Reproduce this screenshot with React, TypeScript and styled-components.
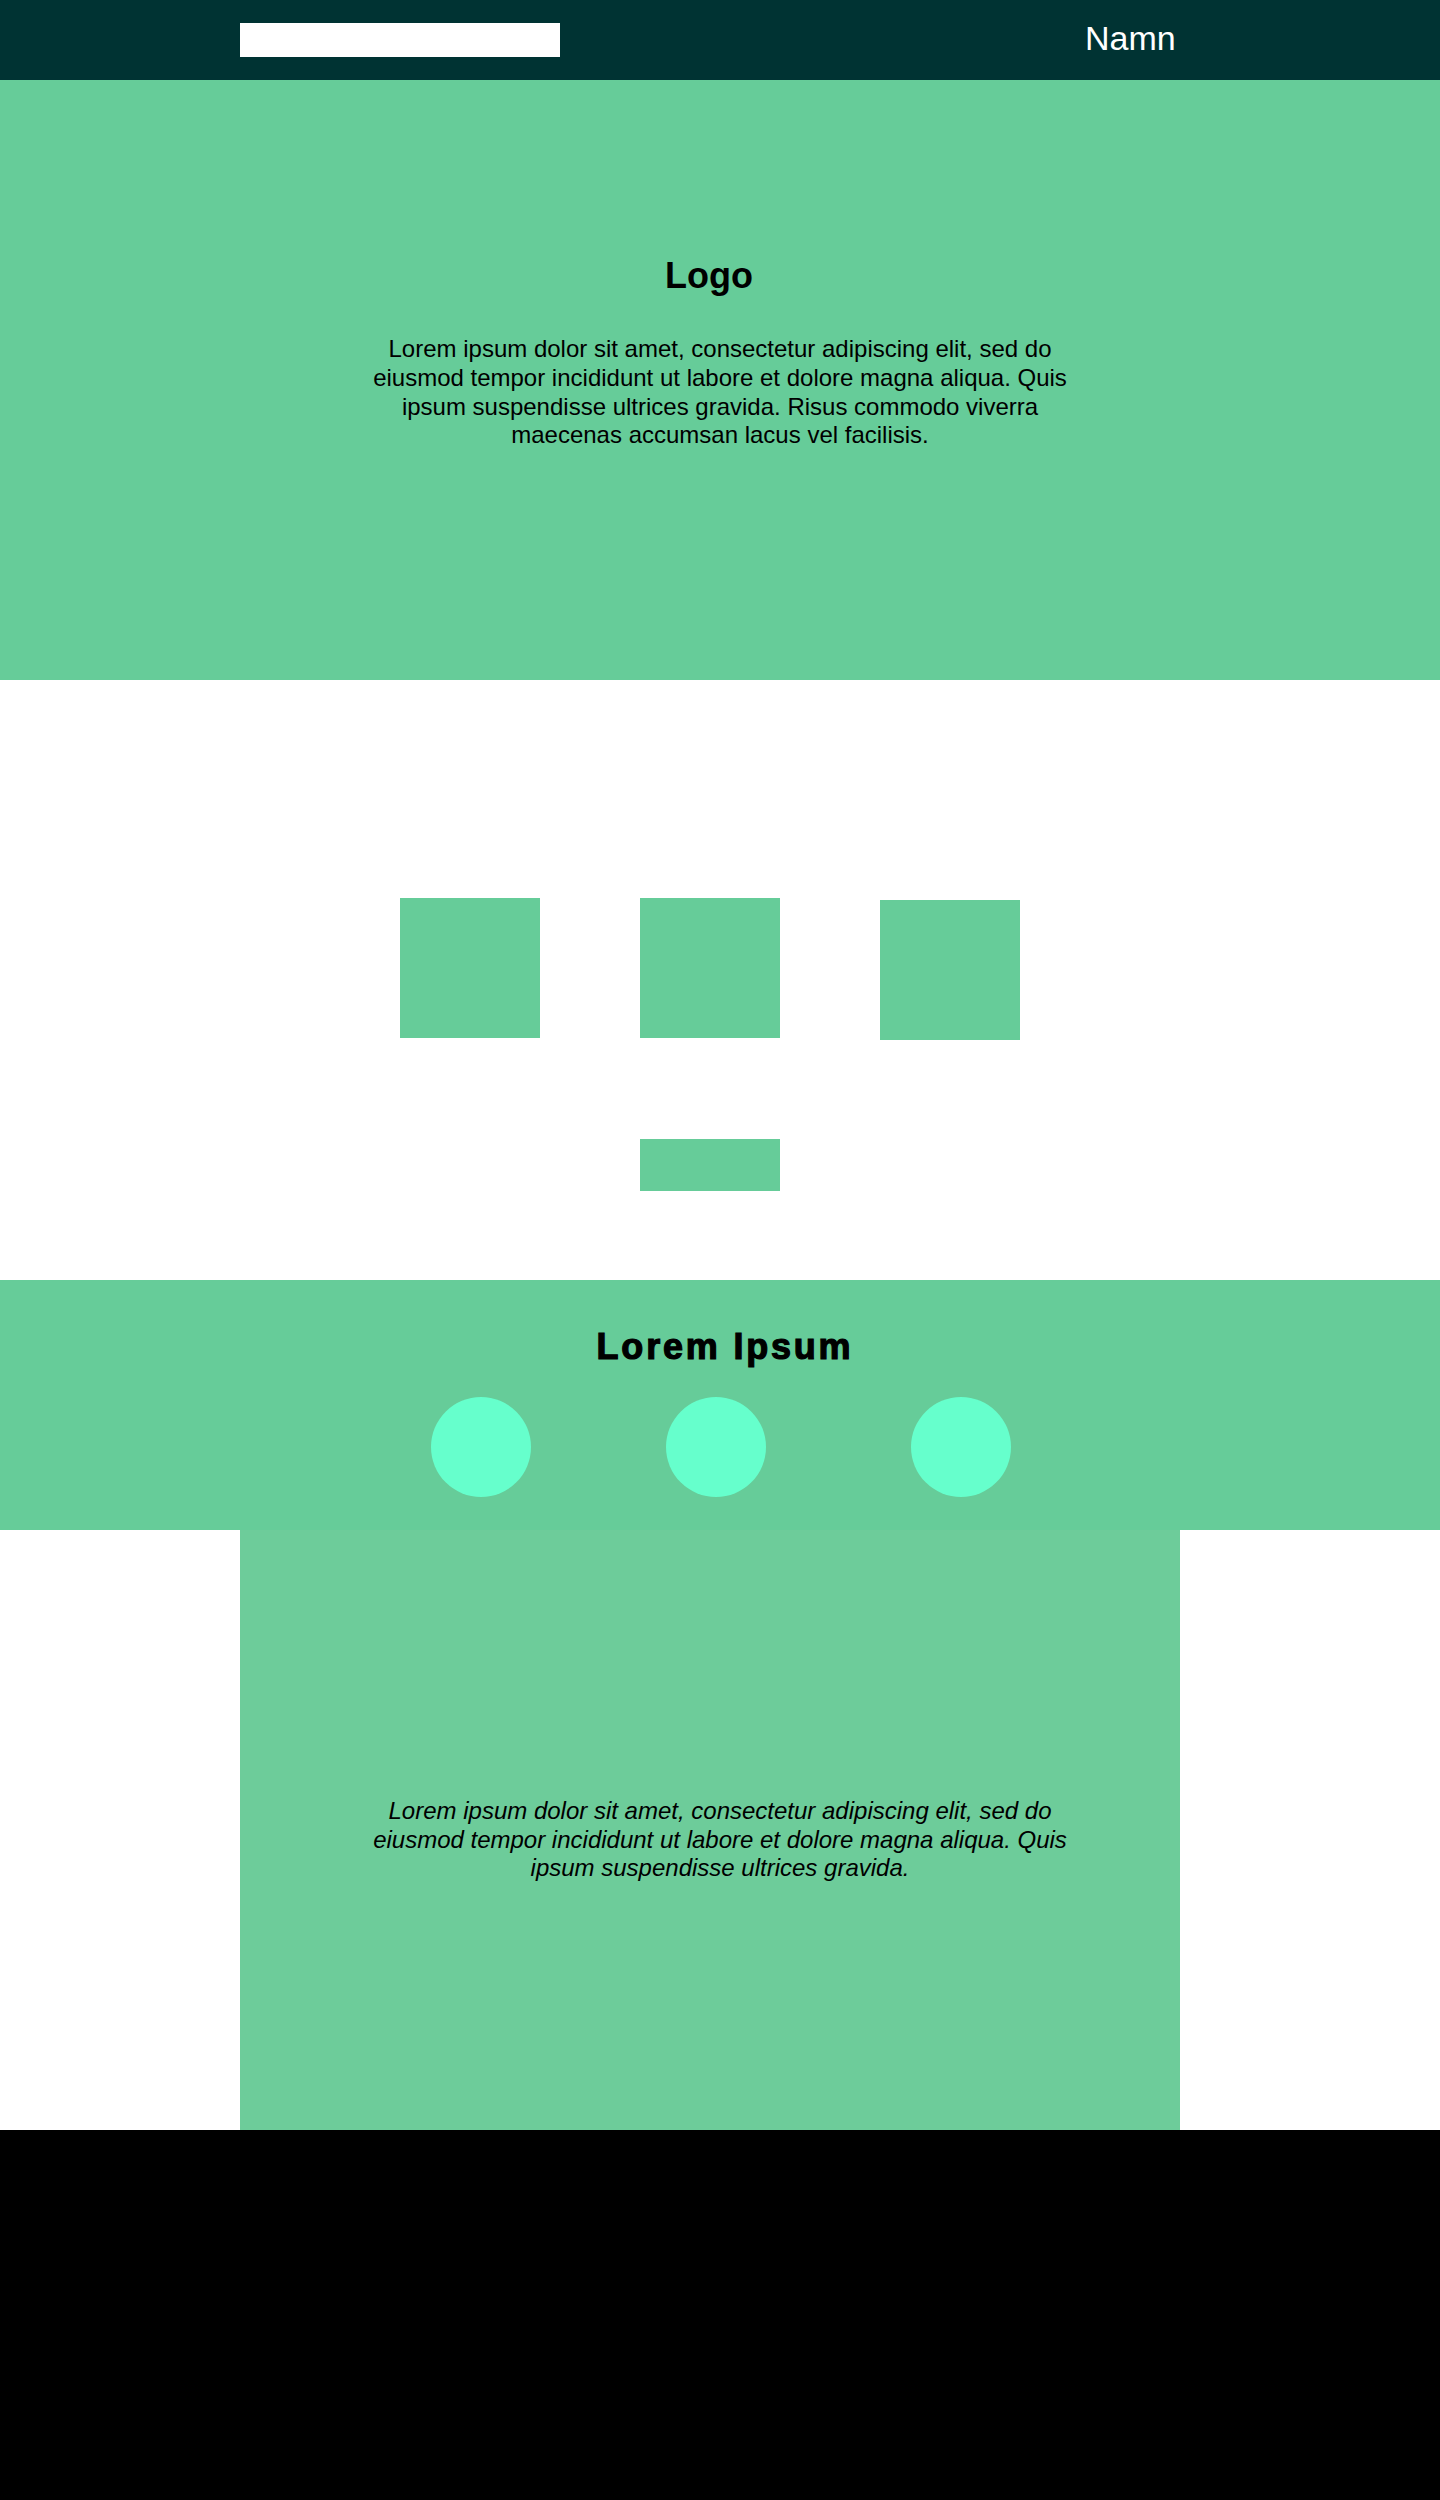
import React from 'react';
import styled, { createGlobalStyle } from 'styled-components';

const GlobalStyle = createGlobalStyle`
  body {
    margin: 0;
    font-family: 'Liberation Sans', Arial, sans-serif;
    background-color: #ffffff;
  }
  * {
    box-sizing: border-box;
  }
`;

const Page = styled.div`
  width: 1440px;
  display: flex;
  flex-direction: column;
`;

const Header = styled.header`
  height: 80px;
  background-color: #003333;
  display: flex;
  align-items: center;
  padding-left: 240px;
`;

const SearchBox = styled.div`
  width: 320px;
  height: 34px;
  background-color: #ffffff;
`;

const NameLabel = styled.div`
  margin-left: 525px;
  width: 90px;
  overflow: hidden;
  white-space: nowrap;
  color: #ffffff;
  font-size: 34px;
  padding-bottom: 3px;
`;

const Hero = styled.section`
  height: 600px;
  background-color: #66cc99;
  display: flex;
  flex-direction: column;
  align-items: center;
  padding-top: 175px;
`;

const Logo = styled.h1`
  margin: 0 22px 0 0;
  font-size: 36px;
  font-weight: bold;
  color: #000000;
`;

const Paragraph = styled.p<{ $italic?: boolean }>`
  width: 700px;
  margin: 0;
  font-size: 24px;
  line-height: 1.2;
  text-align: center;
  color: #000000;
  font-style: ${(props) => (props.$italic ? 'italic' : 'normal')};
`;

const HeroText = styled(Paragraph)`
  margin-top: 38px;
`;

const ProductSection = styled.section`
  height: 600px;
  display: flex;
  flex-direction: column;
  align-items: center;
  padding: 218px 20px 0 0;
`;

const ProductGrid = styled.div`
  display: grid;
  grid-template-columns: repeat(3, 140px);
  column-gap: 100px;
  align-items: start;
`;

const ProductBox = styled.div<{ $offset?: number }>`
  width: 140px;
  height: 140px;
  background-color: #66cc99;
  margin-top: ${(props) => props.$offset || 0}px;
`;

const MoreButton = styled.div`
  width: 140px;
  height: 52px;
  margin-top: 99px;
  background-color: #66cc99;
`;

const Band = styled.section`
  height: 250px;
  background-color: #66cc99;
  display: flex;
  flex-direction: column;
  align-items: center;
  padding-top: 46px;
`;

const BandTitle = styled.h2`
  margin: 0 0 0 10px;
  font-size: 36px;
  font-weight: bold;
  letter-spacing: 2.8px;
  -webkit-text-stroke: 1.2px #000000;
  color: #000000;
`;

const CircleRow = styled.div`
  align-self: flex-start;
  display: flex;
  margin-top: 29px;
  padding-left: 431px;
`;

const Circle = styled.div<{ $gap?: number }>`
  width: 100px;
  height: 100px;
  border-radius: 50%;
  background-color: #66ffcc;
  margin-left: ${(props) => props.$gap || 0}px;
`;

const FeatureWrap = styled.section`
  padding-left: 240px;
`;

const Feature = styled.div`
  width: 940px;
  height: 600px;
  background-color: #6dcc9a;
  display: flex;
  align-items: center;
  justify-content: center;
  padding: 20px 0 0 20px;
`;

const Footer = styled.footer`
  height: 370px;
  background-color: #000000;
`;

function App() {
  return (
    <Page>
      <GlobalStyle />
      <Header>
        <SearchBox />
        <NameLabel>Namn</NameLabel>
      </Header>

      <Hero>
        <Logo>Logo</Logo>
        <HeroText>
          Lorem ipsum dolor sit amet, consectetur adipiscing elit, sed do
          eiusmod tempor incididunt ut labore et dolore magna aliqua. Quis
          ipsum suspendisse ultrices gravida. Risus commodo viverra maecenas
          accumsan lacus vel facilisis.
        </HeroText>
      </Hero>

      <ProductSection>
        <ProductGrid>
          <ProductBox />
          <ProductBox />
          <ProductBox $offset={2} />
        </ProductGrid>
        <MoreButton />
      </ProductSection>

      <Band>
        <BandTitle>Lorem Ipsum</BandTitle>
        <CircleRow>
          <Circle />
          <Circle $gap={135} />
          <Circle $gap={145} />
        </CircleRow>
      </Band>

      <FeatureWrap>
        <Feature>
          <Paragraph $italic>
            Lorem ipsum dolor sit amet, consectetur adipiscing elit, sed do
            eiusmod tempor incididunt ut labore et dolore magna aliqua. Quis
            ipsum suspendisse ultrices gravida.
          </Paragraph>
        </Feature>
      </FeatureWrap>

      <Footer />
    </Page>
  );
}

export default App;
